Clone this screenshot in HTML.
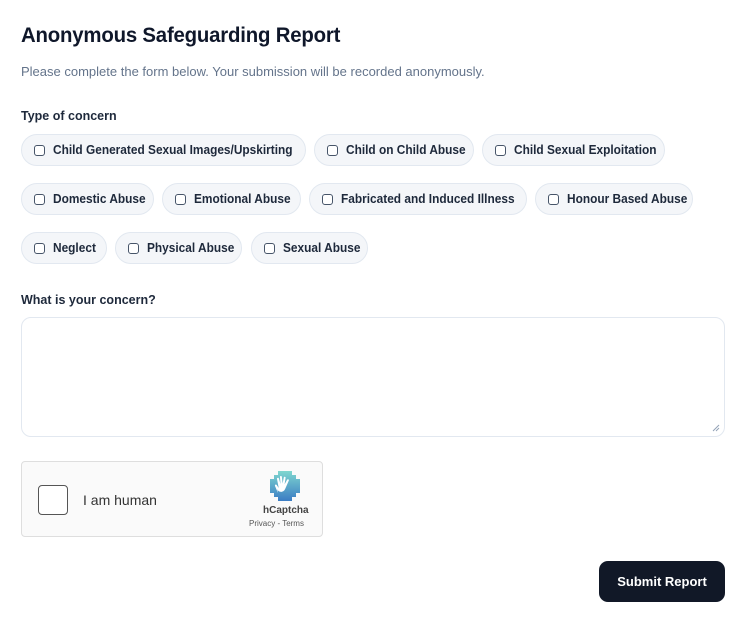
<!DOCTYPE html>
<html><head><style>
*{margin:0;padding:0;box-sizing:border-box}
body{width:742px;height:617px;background:#fff;font-family:"Liberation Sans",sans-serif;color:#111827;position:relative;overflow:hidden}
.a{position:absolute;white-space:nowrap}
h1{position:absolute;left:21px;top:24px;font-size:21px;font-weight:bold;color:#0f172a;transform:scaleX(.97);transform-origin:left;letter-spacing:-.2px}
.sub{left:21px;top:64px;font-size:13px;color:#64748b}
.lbl{font-size:12.5px;font-weight:bold;color:#1e293b}
.chip{position:absolute;height:32px;border:1px solid #e2e8f0;background:#f4f6f9;border-radius:16px}
.chip i{position:absolute;left:12px;top:10px;width:11px;height:11px;border:1.3px solid #475569;border-radius:3px;background:#fff}
.chip span{position:absolute;left:31px;top:8px;font-size:12.5px;font-weight:bold;color:#1e293b;white-space:nowrap;transform:scaleX(.95);transform-origin:left}
.ta{position:absolute;left:21px;top:317px;width:704px;height:120px;border:1px solid #e2e8f0;border-radius:10px}
.cap{position:absolute;left:21px;top:461px;width:302px;height:76px;border:1px solid #dedede;border-radius:4px;background:#fafafa}
.btn{position:absolute;left:599px;top:561px;width:126px;height:41px;background:#111827;border-radius:9px;color:#fff;font-size:13px;font-weight:bold;text-align:center;line-height:41px}
</style></head><body>
<h1>Anonymous Safeguarding Report</h1>
<div class="a sub">Please complete the form below. Your submission will be recorded anonymously.</div>
<div class="a lbl" style="left:21px;top:109px">Type of concern</div>

<div class="chip" style="left:21px;top:134px;width:285px"><i></i><span>Child Generated Sexual Images/Upskirting</span></div>
<div class="chip" style="left:314px;top:134px;width:160px"><i></i><span>Child on Child Abuse</span></div>
<div class="chip" style="left:482px;top:134px;width:183px"><i></i><span>Child Sexual Exploitation</span></div>

<div class="chip" style="left:21px;top:183px;width:133px"><i></i><span>Domestic Abuse</span></div>
<div class="chip" style="left:162px;top:183px;width:139px"><i></i><span>Emotional Abuse</span></div>
<div class="chip" style="left:309px;top:183px;width:218px"><i></i><span>Fabricated and Induced Illness</span></div>
<div class="chip" style="left:535px;top:183px;width:158px"><i></i><span>Honour Based Abuse</span></div>

<div class="chip" style="left:21px;top:232px;width:86px"><i></i><span>Neglect</span></div>
<div class="chip" style="left:115px;top:232px;width:127px"><i></i><span>Physical Abuse</span></div>
<div class="chip" style="left:251px;top:232px;width:117px"><i></i><span>Sexual Abuse</span></div>

<div class="a lbl" style="left:21px;top:293px">What is your concern?</div>
<div class="ta"><svg style="position:absolute;right:4px;bottom:4px" width="8" height="8"><path d="M1 7L7 1M4 7L7 4" stroke="#94a3b8" stroke-width="1"/></svg></div>

<div class="cap">
<div style="position:absolute;left:16px;top:23px;width:30px;height:30px;border:1px solid #555;border-radius:4px;background:#fff"></div>
<div class="a" style="left:61px;top:30px;font-size:14px;color:#333">I am human</div>
<svg style="position:absolute;left:246px;top:7px" width="34" height="34" viewBox="0 0 34 34">
<defs><linearGradient id="g" x1="0" y1="0" x2="0" y2="1"><stop offset="0" stop-color="#7fd6cf"/><stop offset="1" stop-color="#3b7cc4"/></linearGradient></defs>
<path d="M10 2h14v4h4v4h4v14h-4v4h-4v4H10v-4H6v-4H2V10h4V6h4z" fill="url(#g)"/>
<path d="M10 24l-3-7c-.5-1.2 1-2 1.7-1l2 3L9 10c-.3-1.3 1.5-1.7 1.9-.5l1.6 5.5-.5-7c-.1-1.3 1.8-1.3 1.9 0l.7 6.5 1.2-6c.3-1.2 2-.9 1.8.3l-1 6.5 2.5-4.5c.6-1.1 2.200-.3 1.7.8l-3.5 8c-1 2.5-3 3.5-5 3.2-1.5-.2-2.5-1.2-3-2.8z" fill="#fff"/>
</svg>
<div class="a" style="left:241px;top:43px;font-size:10px;font-weight:bold;color:#444">hCaptcha</div>
<div class="a" style="left:227px;top:57px;font-size:8px;color:#555">Privacy - Terms</div>
</div>

<div class="btn">Submit Report</div>
</body></html>
